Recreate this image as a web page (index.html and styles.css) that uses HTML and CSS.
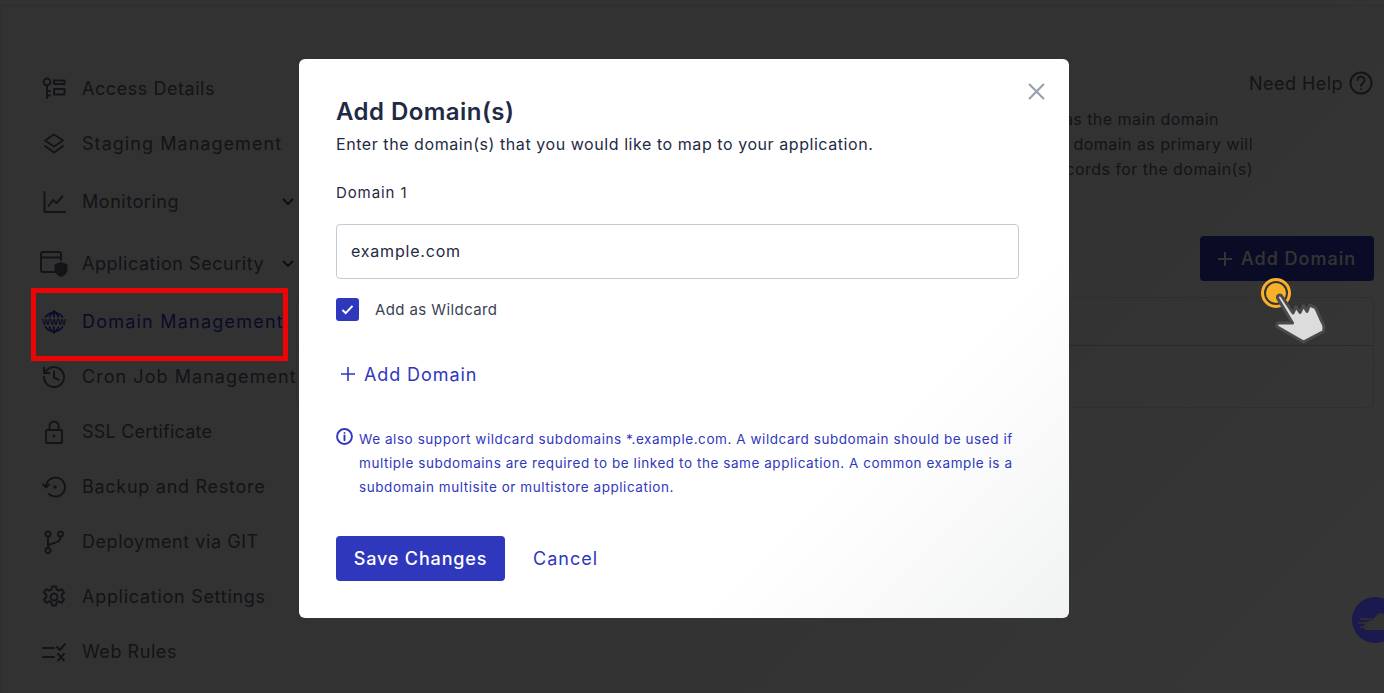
FILE: index.html
```html
<!DOCTYPE html>
<html lang="en">
<head>
<meta charset="utf-8">
<title>Add Domain(s)</title>
<link rel="stylesheet" href="styles.css">
</head>
<body>
<div class="page">
  <nav class="sidebar">
    <a class="nav-item"><svg class="nav-icon" viewBox="0 0 24 24"><circle cx="5" cy="5" r="3.4"/><path d="M5 8.4V21M5 14h3M5 18.500h3"/><rect x="12" y="3.500" width="10.500" height="3.600"/><rect x="12" y="12" width="10.500" height="5.500"/></svg><span>Access Details</span></a>
    <a class="nav-item track-loose"><svg class="nav-icon" viewBox="0 0 24 24"><path d="M12 2.500l9 6-9 6-9-6z"/><path d="M3 14l9 6.500 9-6.500"/></svg><span>Staging Management</span></a>
    <a class="nav-item nav-item-mid"><svg class="nav-icon" viewBox="0 0 24 24"><path d="M2.500 2v20h21"/><path d="M6.500 16l4.500-6 3.500 3 6-6.500"/></svg><span class="nav-label">Monitoring</span><svg class="chevron" viewBox="0 0 12 8"><path d="M1.500 1.500L6 6l4.500-4.500"/></svg></a>
    <a class="nav-item nav-item-wide"><svg class="nav-icon nav-icon-shield" viewBox="0 0 28 26"><path d="M15 21H3a2 2 0 0 1-2-2V3a2 2 0 0 1 2-2h16a2 2 0 0 1 2 2v6M1 6.500h20"/><path class="solid" d="M21 11l6.500 2.500v5c0 3.500-3 6-6.500 7.500-3.500-1.500-6.500-4-6.500-7.500v-5z"/></svg><span class="nav-label">Application Security</span><svg class="chevron" viewBox="0 0 12 8"><path d="M1.500 1.500L6 6l4.500-4.500"/></svg></a>
    <a class="nav-item nav-item-mid nav-item-active"><svg class="nav-icon nav-icon-globe" viewBox="0 0 26 24"><path class="thin" d="M4.500 7a10.500 10.500 0 0 1 17 0M4.500 17a10.500 10.500 0 0 0 17 0M13 1v6M13 17v6M8.500 7C9.500 4.500 11 2.500 13 1c2 1.500 3.500 3.500 4.500 6M8.500 17c1 2.500 2.500 4.500 4.500 6 2-1.500 3.500-3.500 4.500-6"/><text class="www" x="13" y="15.200">WWW</text></svg><span>Domain Management</span></a>
    <a class="nav-item track-loose"><svg class="nav-icon" viewBox="0 0 24 24"><path d="M2 12a10 10 0 1 0 3-7.100L2 8"/><path d="M2 2.500V8h5.500"/><path d="M12 6.500V12.500l4.500 2.200"/></svg><span>Cron Job Management</span></a>
    <a class="nav-item track-tight"><svg class="nav-icon" viewBox="0 0 24 24"><rect x="4" y="10" width="16" height="13" rx="1.500"/><path d="M7.500 10V6a4.500 4.500 0 0 1 9 0v4"/><circle class="solid" cx="12" cy="16" r="1.500"/></svg><span>SSL Certificate</span></a>
    <a class="nav-item track-mid"><svg class="nav-icon" viewBox="0 0 24 24"><path d="M4 12a9.500 9.500 0 1 1 3 7"/><path d="M1 9.500l3 3 3-3"/><circle class="solid" cx="13" cy="12" r="1.700"/></svg><span>Backup and Restore</span></a>
    <a class="nav-item"><svg class="nav-icon" viewBox="0 0 24 24"><circle cx="6" cy="4" r="2.500"/><circle cx="6" cy="20.500" r="2.500"/><circle cx="18.500" cy="4" r="2.500"/><path d="M6 6.500v11.500M18.500 6.500c0 5-4 6-8 7-2.500.6-4.500 1.500-4.500 4"/></svg><span>Deployment via GIT</span></a>
    <a class="nav-item track-mid"><svg class="nav-icon" viewBox="0 0 24 24"><circle cx="12" cy="12" r="3.500"/><path d="M10 1.500h4l.7 3.200 2.200 1 2.900-1.500 2.300 3.400-2.400 2.200v2.400l2.400 2.200-2.300 3.400-2.900-1.500-2.200 1-.7 3.200h-4l-.7-3.200-2.200-1-2.900 1.500-2.300-3.400 2.400-2.200v-2.400L1.800 7.600l2.300-3.400L7 5.700l2.200-1z"/></svg><span>Application Settings</span></a>
    <a class="nav-item"><svg class="nav-icon" viewBox="0 0 24 24"><path d="M1 8h11M1 17h11M15 7l3 3 5-6M16 14l6 6.500M22 14l-6 6.500"/></svg><span>Web Rules</span></a>
  </nav>

  <main class="content">
    <div class="help-row"><span>Need Help</span><svg class="help-icon" viewBox="0 0 24 24"><circle cx="12" cy="12" r="10.500"/><path d="M8.500 9a3.500 3.500 0 1 1 5.500 3c-1.300.9-2 1.500-2 3"/><circle class="solid" cx="12" cy="18.300" r="1"/></svg></div>
    <div class="intro">
      <p class="intro-line intro-line-first">This domain is used as the main domain</p>
      <p class="intro-line">Setting a domain as primary will</p>
      <p class="intro-line">Update the DNS records for the domain(s)</p>
    </div>
    <div class="actions">
      <button class="add-btn"><svg class="add-plus" viewBox="0 0 14 14"><path d="M7 0v14M0 7h14"/></svg><span>Add Domain</span></button>
    </div>
    <div class="table">
      <div class="table-head"></div>
      <div class="table-row"></div>
    </div>
  </main>
</div>

<div class="backdrop"></div>

<div class="highlight"></div>

<svg class="pointer" viewBox="0 0 70 72">
  <circle cx="16" cy="16" r="13.500" class="ring"/>
  <circle cx="16" cy="16" r="10" class="dot"/>
  <path class="hand" d="M17.500 21c-.5-3 3-4 4.500-1.500L33 36l3-6.500 4 6 3.500-7 3.500 6 2.500-6.500 6 2.500c2 4 6 14 8 17 1 3 .5 5 0 7L43.500 65 17.500 50c-1.500-1.500-1-4 1.500-4l13.500 0z"/>
</svg>

<div class="chat-bubble"><svg viewBox="0 0 32 46"><circle class="chat-disc" cx="23" cy="23" r="23"/><path class="chat-cloud" d="M12 30c0-4 4-6 8-7l6-6c3-2 6-1 6 1v15H14c-1 0-2-1-2-3z"/><path class="chat-lines" d="M8 22h12M6 26h13M8 30h9"/></svg></div>

<section class="modal">
  <button class="close" aria-label="Close"><svg viewBox="0 0 16 16"><path d="M1.500 1.500l13 13M14.500 1.500l-13 13"/></svg></button>
  <h2 class="modal-title">Add Domain(s)</h2>
  <p class="modal-sub">Enter the domain(s) that you would like to map to your application.</p>
  <label class="field-label">Domain 1</label>
  <input class="field-input" type="text" value="example.com">
  <div class="check-row">
    <span class="check-box"><svg viewBox="0 0 14 12"><path d="M1.500 6.500L5 10l7.500-8"/></svg></span>
    <span class="check-label">Add as Wildcard</span>
  </div>
  <div class="add-link"><svg class="add-link-icon" viewBox="0 0 14 14"><path d="M7 0v14M0 7h14"/></svg><span>Add Domain</span></div>
  <div class="note">
    <svg class="note-icon" viewBox="0 0 16 16"><circle cx="8" cy="8" r="7"/><path d="M8 7v4.500"/><circle class="solid" cx="8" cy="4.600" r=".9"/></svg>
    <p class="note-text">We also support wildcard subdomains *.example.com. A wildcard subdomain should be used if<br>multiple subdomains are required to be linked to the same application. A common example is a<br>subdomain multisite or multistore application.</p>
  </div>
  <div class="modal-actions">
    <button class="save-btn">Save Changes</button>
    <a class="cancel">Cancel</a>
  </div>
</section>
</body>
</html>
```
FILE: styles.css
```css
* { box-sizing: border-box; }
html, body { margin: 0; height: 100%; overflow: hidden; }
body { font-family: "Inter", "Liberation Sans", sans-serif; background: #fff; color: #1f2a44; }
p { margin: 0; }

.page { display: flex; height: 688px; margin-top: 5px; border-top: 1px solid #e4e4e4; border-left: 3px solid #efefef; background: #ffffff; color: #5c6372; }
.sidebar { width: 293px; flex: none; padding: 55px 0 0 39px; display: flex; flex-direction: column; }
.nav-item { height: 55px; display: flex; align-items: center; gap: 16px; font-size: 18px; letter-spacing: .55px; white-space: nowrap; color: #5c6272; }
.track-loose { letter-spacing: 1.05px; }
.track-mid { letter-spacing: .72px; }
.track-tight { letter-spacing: .2px; }
.nav-item-mid { margin-top: 3px; }
.nav-item-wide { margin-top: 7px; }
.nav-item-active { color: #3236c8; letter-spacing: 1.22px; }
.nav-label { flex: 1; }
.nav-icon { width: 24px; height: 24px; flex: none; fill: none; stroke: currentColor; stroke-width: 2; stroke-linecap: round; stroke-linejoin: round; }
.nav-icon .solid { fill: currentColor; stroke: none; }
.nav-icon .thin { stroke-width: 1.700; }
.nav-icon .www { font: 700 8.500px "Liberation Sans", sans-serif; fill: currentColor; stroke: none; text-anchor: middle; letter-spacing: 0; }
.nav-icon-shield { margin-left: -2px; margin-right: -2px; width: 28px; height: 26px; }
.nav-icon-globe { margin-left: -1px; margin-right: -1px; width: 26px; }
.chevron { width: 12px; height: 8px; margin-right: 2px; flex: none; fill: none; stroke: #3f4554; stroke-width: 2; stroke-linecap: round; stroke-linejoin: round; }

.content { flex: 1; padding: 65px 10px 0 0; min-width: 0; display: flex; flex-direction: column; }
.help-row { display: flex; justify-content: flex-end; align-items: center; gap: 6px; font-size: 18px; letter-spacing: .45px; height: 24px; color: #5c6272; }
.help-icon { width: 24px; height: 24px; margin-right: 1px; fill: none; stroke: currentColor; stroke-width: 2; stroke-linecap: round; }
.help-icon .solid { fill: currentColor; stroke: none; }
.intro { margin-top: 12px; padding-right: 121px; font-size: 16px; letter-spacing: .45px; line-height: 25px; text-align: right; white-space: nowrap; }
.intro-line-first { margin-right: 34px; }
.actions { display: flex; justify-content: flex-end; margin-top: 54px; }
.add-btn { width: 174px; height: 45px; border: 0; border-radius: 4px; background: #2f38bd; color: #fff; font: 500 18px "Inter", "Liberation Sans", sans-serif; letter-spacing: 1px; display: flex; align-items: center; justify-content: center; gap: 9px; }
.add-plus { width: 14px; height: 14px; fill: none; stroke: currentColor; stroke-width: 2; }
.table { margin-top: 16px; border: 1px solid #e2e4ea; border-radius: 4px; height: 111px; }
.table-head { height: 48px; border-bottom: 1px solid #c8cbd3; }

.backdrop { position: fixed; inset: 0; background: linear-gradient(135deg, #323232 60%, #363736 100%); mix-blend-mode: multiply; }
.highlight { position: fixed; left: 31px; top: 288px; width: 257px; height: 73px; border: 5px solid #ee0404; }

.pointer { position: fixed; left: 1260px; top: 277px; width: 70px; height: 72px; }
.ring { fill: none; stroke: #fbb02b; stroke-width: 3; }
.dot { fill: #fbb02b; }
.hand { fill: #dcdcdc; stroke: #4a4a4a; stroke-width: 3; stroke-linejoin: round; }

.chat-bubble { position: fixed; left: 1352px; top: 597px; width: 32px; height: 46px; }
.chat-bubble svg { display: block; width: 32px; height: 46px; }
.chat-disc { fill: #1a1a4e; }
.chat-cloud { fill: #333; }
.chat-lines { stroke: #333; stroke-width: 1.500; fill: none; }

.modal { position: fixed; left: 299px; top: 59px; width: 770px; height: 559px; padding: 38px 37px 0; border-radius: 6px; background: linear-gradient(135deg, #fff 72%, #f1f3f2 100%); color: #1f2a44; }
.close { position: absolute; right: 24px; top: 24px; width: 17px; height: 17px; padding: 0; border: 0; background: none; }
.close svg { display: block; width: 17px; height: 17px; fill: none; stroke: #98a0ae; stroke-width: 2; stroke-linecap: round; }
.modal-title { margin: 0; font-size: 24px; letter-spacing: .45px; line-height: 30px; font-weight: 600; color: #1f2a44; }
.modal-sub { margin-top: 5px; font-size: 16px; line-height: 24px; letter-spacing: .56px; color: #1f2a44; }
.field-label { display: block; margin-top: 25px; font-size: 15px; letter-spacing: .9px; line-height: 24px; color: #1f2a44; }
.field-input { display: block; width: 683px; height: 55px; margin-top: 19px; padding: 0 14px 2px; border: 1px solid #c6cad4; border-radius: 4px; font: 16px "Inter", "Liberation Sans", sans-serif; letter-spacing: .8px; color: #1f2a44; background: #fff; }
.check-row { display: flex; align-items: center; gap: 16px; margin-top: 19px; height: 23px; }
.check-box { width: 23px; height: 23px; border-radius: 3px; background: #2f38bd; display: flex; align-items: center; justify-content: center; }
.check-box svg { width: 13px; height: 11px; fill: none; stroke: #fff; stroke-width: 2.200; }
.check-label { font-size: 15px; letter-spacing: .4px; line-height: 20px; color: #3a4256; }
.add-link { display: flex; align-items: center; gap: 9px; margin-top: 41px; padding-left: 5px; height: 24px; font-size: 18px; letter-spacing: .9px; color: #2f38bd; }
.add-link-icon { width: 14px; height: 14px; fill: none; stroke: currentColor; stroke-width: 1.600; }
.note { display: flex; gap: 6px; margin-top: 41px; color: #2f38bd; }
.note-icon { flex: none; width: 17px; height: 17px; margin-top: 1px; fill: none; stroke: currentColor; stroke-width: 1.800; stroke-linecap: round; }
.note-icon .solid { fill: currentColor; stroke: none; }
.note-text { font-size: 13.500px; letter-spacing: .56px; line-height: 24px; white-space: nowrap; }
.modal-actions { display: flex; align-items: center; gap: 28px; margin-top: 37px; }
.save-btn { width: 169px; height: 45px; border: 0; border-radius: 4px; background: #2f38bd; color: #fff; font: 500 18px "Inter", "Liberation Sans", sans-serif; letter-spacing: .85px; }
.cancel { font-size: 18px; letter-spacing: 1px; color: #2f38bd; }
```
